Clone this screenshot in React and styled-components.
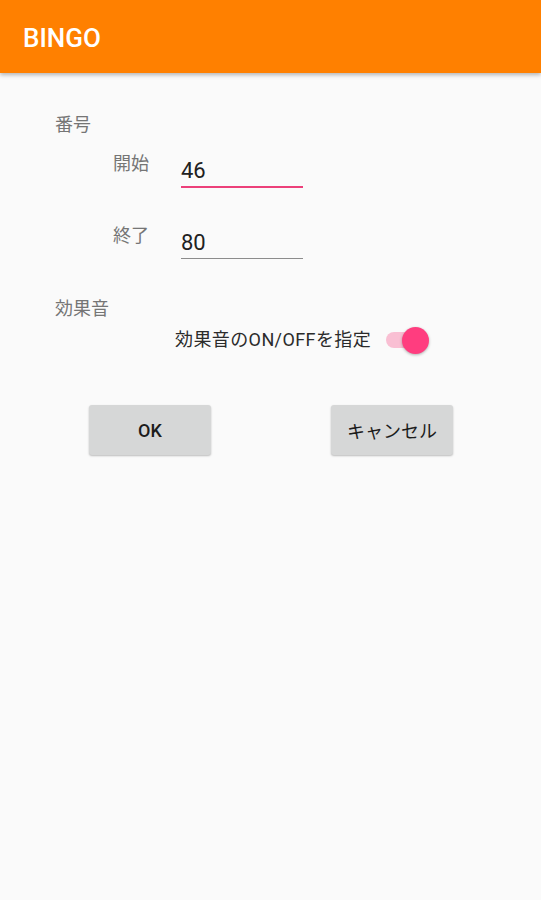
import React from "react";
import styled, { createGlobalStyle } from "styled-components";

const GlobalStyle = createGlobalStyle`
  html, body {
    margin: 0;
    padding: 0;
    background: #fafafa;
  }
  body {
    font-family: Roboto, "Noto Sans CJK JP", "Noto Sans", sans-serif;
    -webkit-font-smoothing: antialiased;
  }
`;

const Screen = styled.div`
  width: 541px;
  min-height: 900px;
  background: #fafafa;
`;

const AppBar = styled.header`
  height: 73px;
  background: #ff8000;
  display: flex;
  align-items: center;
  padding-left: 23px;
  box-shadow: 0 2px 4px rgba(0, 0, 0, 0.28);
  position: relative;
`;

const Title = styled.h1`
  margin: 0;
  margin-top: 2px;
  color: #fff;
  font-family: Roboto, sans-serif;
  font-size: 26px;
  font-weight: 500;
  letter-spacing: 0;
`;

const Content = styled.main`
  padding: 40px 0 0 55px;
  display: flex;
  flex-direction: column;
`;

const SectionLabel = styled.div`
  font-size: 18px;
  line-height: 24px;
  color: #757575;
  margin-top: ${(p) => p.$mt || 0}px;
`;

const FieldRow = styled.div`
  display: flex;
  align-items: flex-start;
  padding-left: 58px;
  margin-top: ${(p) => p.$mt || 0}px;
`;

const FieldLabel = styled.div`
  width: 68px;
  font-size: 18px;
  line-height: 24px;
  margin-top: 4px;
  color: #757575;
`;

const InputBox = styled.div`
  width: 122px;
  padding: 10px 0 2px 0;
  border-bottom: ${(p) => (p.$focused ? "2px solid #ec407a" : "1px solid #8c8c8c")};
  font-family: Roboto, sans-serif;
  font-size: 22px;
  line-height: 26px;
  color: #212121;
`;

const SwitchRow = styled.div`
  display: flex;
  align-items: center;
  padding-left: 120px;
  margin-top: 7px;
`;

const SwitchText = styled.span`
  font-size: 18px;
  line-height: 24px;
  letter-spacing: 0.4px;
  color: #2b2b2b;
  margin-right: 15px;
`;

const SwitchTrack = styled.div`
  position: relative;
  width: 40px;
  height: 16px;
  border-radius: 8px;
  background: #f9bfd3;
`;

const SwitchThumb = styled.div`
  position: absolute;
  top: 50%;
  right: -3px;
  width: 27px;
  height: 27px;
  margin-top: -13.5px;
  border-radius: 50%;
  background: #ff3d7f;
  box-shadow: 0 1px 3px rgba(0, 0, 0, 0.3);
`;

const ButtonRow = styled.div`
  display: flex;
  justify-content: space-between;
  padding: 0 88px 0 34px;
  margin-top: 53px;
`;

const Button = styled.button`
  width: 122px;
  height: 50px;
  border: none;
  border-radius: 3px;
  background: #d6d7d7;
  box-shadow: 0 1px 2px rgba(0, 0, 0, 0.25);
  font-family: Roboto, "Noto Sans CJK JP", sans-serif;
  font-size: 18px;
  font-weight: ${(p) => (p.$latin ? 500 : 400)};
  color: #1c1c1c;
  padding: 0;
  cursor: pointer;
`;

export default function App() {
  return (
    <>
      <GlobalStyle />
      <Screen>
        <AppBar>
          <Title>BINGO</Title>
        </AppBar>
        <Content>
          <SectionLabel>番号</SectionLabel>
          <FieldRow $mt={11}>
            <FieldLabel>開始</FieldLabel>
            <InputBox $focused>46</InputBox>
          </FieldRow>
          <FieldRow $mt={32}>
            <FieldLabel>終了</FieldLabel>
            <InputBox>80</InputBox>
          </FieldRow>
          <SectionLabel $mt={38}>効果音</SectionLabel>
          <SwitchRow>
            <SwitchText>効果音のON/OFFを指定</SwitchText>
            <SwitchTrack>
              <SwitchThumb />
            </SwitchTrack>
          </SwitchRow>
          <ButtonRow>
            <Button $latin>OK</Button>
            <Button>キャンセル</Button>
          </ButtonRow>
        </Content>
      </Screen>
    </>
  );
}
